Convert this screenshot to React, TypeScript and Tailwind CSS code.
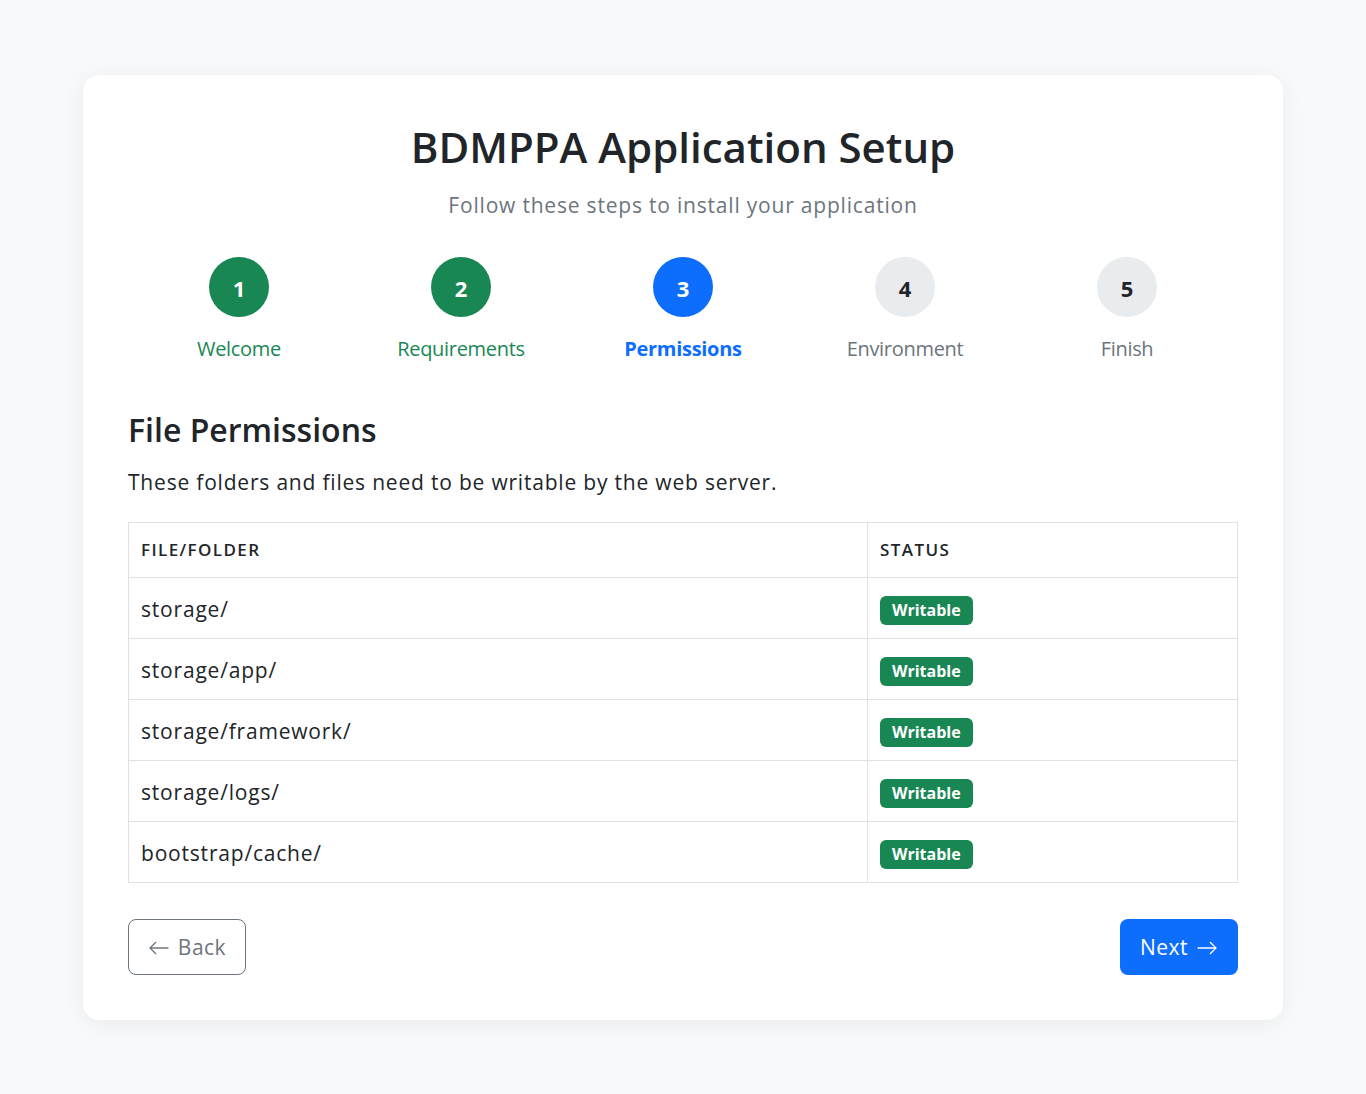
import React from 'react';

type StepState = 'done' | 'active' | 'todo';

const steps: { n: number; label: string; state: StepState }[] = [
  { n: 1, label: 'Welcome', state: 'done' },
  { n: 2, label: 'Requirements', state: 'done' },
  { n: 3, label: 'Permissions', state: 'active' },
  { n: 4, label: 'Environment', state: 'todo' },
  { n: 5, label: 'Finish', state: 'todo' },
];

const paths = ['storage/', 'storage/app/', 'storage/framework/', 'storage/logs/', 'bootstrap/cache/'];

const ArrowLeft = () => (
  <svg width="22" height="22" viewBox="0 0 16 16" fill="currentColor">
    <path fillRule="evenodd" d="M15 8a.5.5 0 0 0-.5-.5H2.707l3.147-3.146a.5.5 0 1 0-.708-.708l-4 4a.5.5 0 0 0 0 .708l4 4a.5.5 0 0 0 .708-.708L2.707 8.5H14.5A.5.5 0 0 0 15 8" />
  </svg>
);

const ArrowRight = () => (
  <svg width="22" height="22" viewBox="0 0 16 16" fill="currentColor">
    <path fillRule="evenodd" d="M1 8a.5.5 0 0 1 .5-.5h11.793l-3.147-3.146a.5.5 0 0 1 .708-.708l4 4a.5.5 0 0 1 0 .708l-4 4a.5.5 0 0 1-.708-.708L13.293 8.5H1.5A.5.5 0 0 1 1 8" />
  </svg>
);

const App: React.FC = () => {
  return (
    <div className="min-h-screen bg-[#f8f9fa] py-[75px] font-['Open_Sans',sans-serif] text-[#212529]">
      <div className="mx-auto w-[1200px] rounded-2xl bg-white p-[45px] shadow-[0_4px_24px_rgba(0,0,0,0.06)]">
        {/* Header */}
        <div className="text-center">
          <h1 className="text-[42px] font-semibold leading-[48px] pt-[3px]">BDMPPA Application Setup</h1>
          <p className="mt-[19px] text-[21px] leading-[30px] text-[#6c757d] tracking-[0.8px]">Follow these steps to install your application</p>
        </div>

        {/* Stepper */}
        <div className="mt-[37px] grid grid-cols-5">
          {steps.map(s => (
            <div key={s.n} className="flex flex-col items-center">
              <div
                className={`flex h-[60px] w-[60px] items-center justify-center rounded-full pt-[2px] text-[22px] font-bold ${
                  s.state === 'done'
                    ? 'bg-[#198754] text-white'
                    : s.state === 'active'
                    ? 'bg-[#0d6efd] text-white'
                    : 'bg-[#e9ecef] text-[#212529]'
                }`}
              >
                {s.n}
              </div>
              <div
                className={`mt-[17px] text-[20px] leading-[30px] tracking-[-0.3px] ${
                  s.state === 'done'
                    ? 'text-[#198754]'
                    : s.state === 'active'
                    ? 'font-bold text-[#0d6efd]'
                    : 'text-[#6c757d]'
                }`}
              >
                {s.label}
              </div>
            </div>
          ))}
        </div>

        {/* Permissions */}
        <h2 className="mt-[47px] text-[32px] font-semibold leading-[38px]">File Permissions</h2>
        <p className="mt-[18px] text-[21px] leading-[30px] tracking-[0.8px]">These folders and files need to be writable by the web server.</p>

        <table className="mt-[25px] w-full border-collapse border border-[#dee2e6]">
          <thead>
            <tr>
              <th className="w-[739px] border border-[#dee2e6] px-[12px] py-[15px] text-left text-[17px] font-semibold uppercase leading-[24px] tracking-[1.4px]">File/Folder</th>
              <th className="border border-[#dee2e6] px-[12px] py-[15px] text-left text-[17px] font-semibold uppercase leading-[24px] tracking-[1.4px]">Status</th>
            </tr>
          </thead>
          <tbody>
            {paths.map(p => (
              <tr key={p}>
                <td className="border border-[#dee2e6] px-[12px] pt-[16px] pb-[14px] text-[21px] leading-[30px] tracking-[0.8px]">{p}</td>
                <td className="border border-[#dee2e6] px-[12px] pt-[17px] pb-[13px]">
                  <span className="inline-flex h-[29px] items-center rounded-[6px] bg-[#198754] px-[12px] text-[16px] font-bold text-white">
                    Writable
                  </span>
                </td>
              </tr>
            ))}
          </tbody>
        </table>

        {/* Actions */}
        <div className="mt-[36px] flex items-center justify-between">
          <button className="flex h-[56px] w-[118px] items-center justify-center gap-[8px] rounded-[8px] border border-[#6c757d] pt-[2px] text-[21px] tracking-[0.5px] text-[#6c757d]">
            <ArrowLeft />
            <span>Back</span>
          </button>
          <button className="flex h-[56px] w-[118px] items-center justify-center gap-[8px] rounded-[8px] bg-[#0d6efd] pt-[2px] text-[21px] tracking-[0.5px] text-white">
            <span>Next</span>
            <ArrowRight />
          </button>
        </div>
      </div>
    </div>
  );
};

export default App;
